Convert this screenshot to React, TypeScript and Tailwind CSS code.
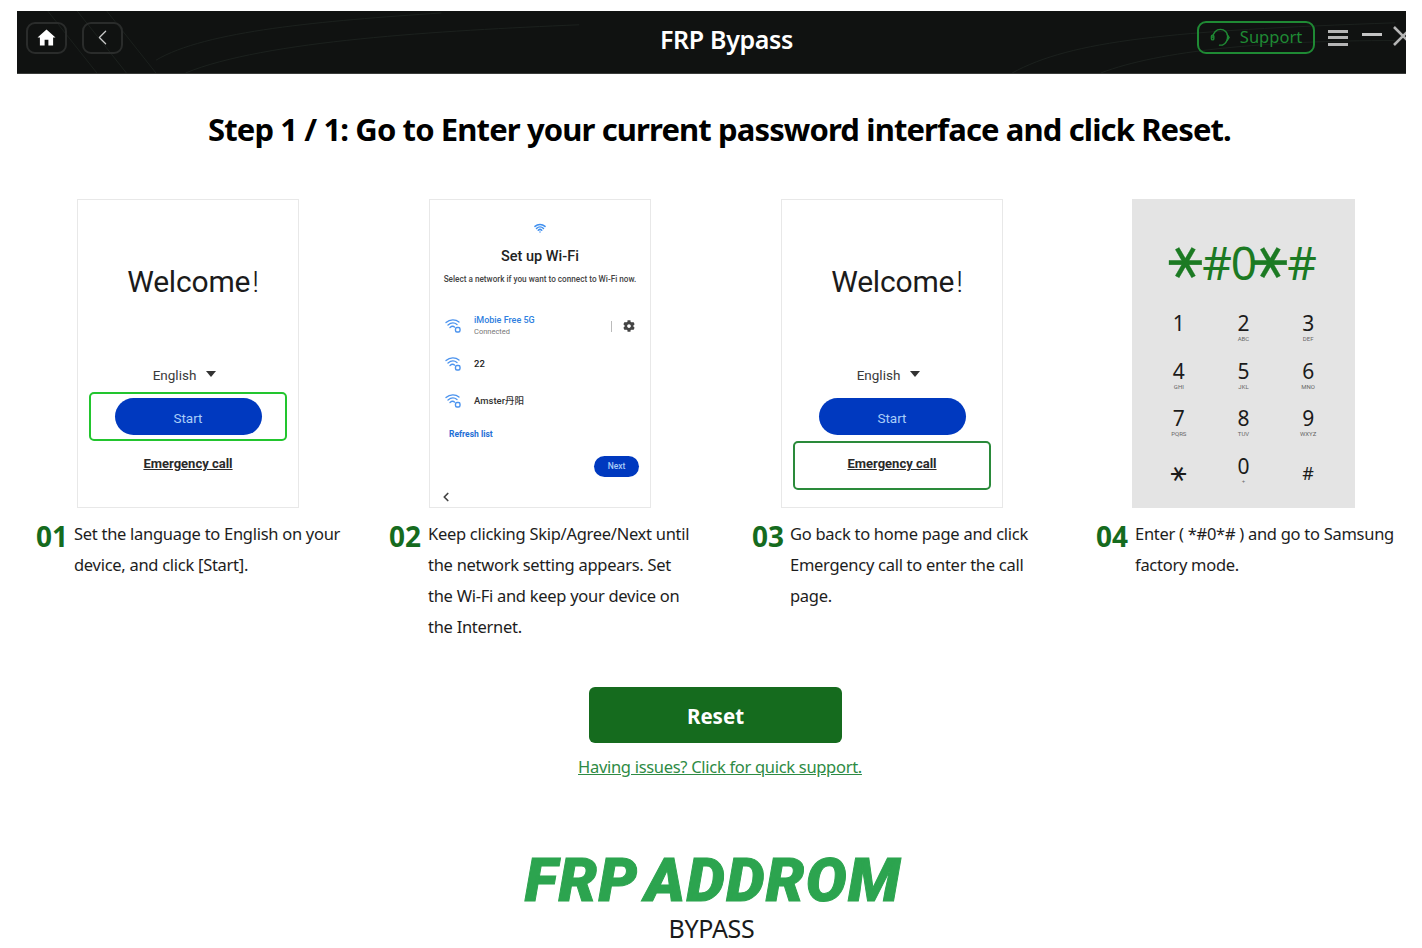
import { ChevronLeft, Wifi } from "lucide-react";
import { FaCog } from "react-icons/fa";

const uiFont = "font-['Noto_Sans',sans-serif]";
const phoneFont = "font-['Roboto',sans-serif]";

const steps = [
  {
    num: "01",
    text: ["Set the language to English on your", "device, and click [Start]."],
    pad: "pl-[24px]",
    numWidth: "w-[38px]",
  },
  {
    num: "02",
    text: ["Keep clicking Skip/Agree/Next until", "the network setting appears. Set", "the Wi-Fi and keep your device on", "the Internet."],
    pad: "pl-[25px]",
    numWidth: "w-[39px]",
  },
  {
    num: "03",
    text: ["Go back to home page and click", "Emergency call to enter the call", "page."],
    pad: "pl-[36px]",
    numWidth: "w-[38px]",
  },
  {
    num: "04",
    text: ["Enter ( *#0*# ) and go to Samsung", "factory mode."],
    pad: "pl-[28px]",
    numWidth: "w-[39px]",
  },
];

const dialKeys = [
  ["1", ""],
  ["2", "ABC"],
  ["3", "DEF"],
  ["4", "GHI"],
  ["5", "JKL"],
  ["6", "MNO"],
  ["7", "PQRS"],
  ["8", "TUV"],
  ["9", "WXYZ"],
];

const HomeIcon = () => (
  <svg viewBox="0 0 20 18" className="h-[17px] w-[19px]" fill="#fff">
    <path d="M10 0.5 L19.5 9 L17 9 L17 17.5 L12 17.5 L12 11.5 L8 11.5 L8 17.5 L3 17.5 L3 9 L0.5 9 Z" />
  </svg>
);

const HeadsetIcon = () => (
  <svg viewBox="0 0 22 22" className="h-[21px] w-[21px]" fill="none" stroke="#1f8a34" strokeWidth="1.5" strokeLinecap="round">
    <path d="M3 11 C3 6 6.5 2.5 11 2.5 C15.5 2.5 18.5 6 18.5 9.5 C18.5 14 17 17.5 13 19 L10 19" />
    <rect x="1.5" y="8.5" width="2.5" height="5" rx="1.2" />
    <path d="M18 8 L20 11 L18 14" />
  </svg>
);

const LockWifi = () => (
  <svg viewBox="0 0 18 16" className="h-[16px] w-[18px]" fill="none" stroke="#4b93ee" strokeWidth="1.3" strokeLinecap="round">
    <path d="M1 4.5 C5 1 10.5 1 14 4" />
    <path d="M3 7 C6 4.5 9.5 4.5 12 6.5" />
    <path d="M5 9.5 C6.5 8.2 8.5 8.2 9.5 9" />
    <rect x="10.5" y="9.5" width="4.5" height="4.5" rx="1.5" strokeWidth="1.4" />
  </svg>
);

const WelcomeScreen = ({ highlight }: { highlight: "start" | "call" }) => (
  <div className={`flex h-[309px] w-[222px] flex-col items-center border border-[#e8e8e8] bg-white text-[#1b1b1b] ${phoneFont}`}>
    <p className="mt-[64px] ml-[10px] h-[36px] text-[30px] leading-[36px] tracking-[-0.2px]">
      Welcome<span className="ml-[2px] font-light">!</span>
    </p>
    <div className="mt-[65px] mr-[7px] flex h-[20px] items-center gap-[10px] text-[13.5px] text-[#3a3a3a]">
      <span>English</span>
      <span className="mb-[2px] h-0 w-0 border-x-[5px] border-t-[6px] border-x-transparent border-t-[#333]" />
    </div>
    <div className={`mt-[7px] flex h-[49px] w-[198px] items-center justify-center rounded-[5px] border-[2.5px] ${highlight === "start" ? "border-[#22c52e]" : "border-transparent"}`}>
      <div className="flex h-[37px] w-[147px] items-center justify-center rounded-full bg-[#0039bf] pt-[3px] text-[13.5px] text-[#a9cdf8]">
        Start
      </div>
    </div>
    <div className={`flex h-[49px] w-[198px] items-center justify-center rounded-[5px] border-[2.5px] pb-[3px] ${highlight === "call" ? "border-[#2a8a3a]" : "border-transparent"}`}>
      <span className="text-[13px] font-bold text-[#2a2a2a] underline">Emergency call</span>
    </div>
  </div>
);

const WifiScreen = () => (
  <div className={`flex h-[309px] w-[222px] flex-col border border-[#e8e8e8] bg-white text-[#222] ${phoneFont}`}>
    <div className="mt-[22px] flex justify-center">
      <Wifi size={12} strokeWidth={3} color="#3f8fef" />
    </div>
    <p className="mt-[13px] text-center text-[14.5px] font-medium leading-[20px]">Set up Wi-Fi</p>
    <p className="mt-[6px] text-center text-[8.2px] font-medium leading-[12px] text-[#444]">
      Select a network if you want to connect to Wi-Fi now.
    </p>
    <div className="mt-[30px] flex items-center pl-[15px] pr-[15px]">
      <LockWifi />
      <div className="ml-[11px] flex-1">
        <p className="text-[9px] font-medium leading-[11px] text-[#2f7fe0]">iMobie Free 5G</p>
        <p className="text-[7.5px] leading-[11px] text-[#777]">Connected</p>
      </div>
      <span className="mr-[11px] h-[11px] w-px bg-[#bbb]" />
      <FaCog size={12} color="#444" />
    </div>
    <div className="mt-[19px] flex items-center pl-[15px]">
      <LockWifi />
      <p className="ml-[11px] text-[9.5px] font-medium">22</p>
    </div>
    <div className="mt-[21px] flex items-center pl-[15px]">
      <LockWifi />
      <p className="ml-[11px] text-[9.5px] font-medium text-[#333]">
        Amster<span className="font-['Noto_Sans_CJK_SC',sans-serif]">丹阳</span>
      </p>
    </div>
    <p className="mt-[19px] pl-[19px] text-[8.5px] font-bold leading-[12px] text-[#1f6fd6]">Refresh list</p>
    <div className="mt-[16px] flex justify-end pr-[11px]">
      <div className="flex h-[21px] w-[45px] items-center justify-center rounded-full bg-[#0039bf] text-[8.5px] font-medium text-[#a9cdf8]">
        Next
      </div>
    </div>
    <ChevronLeft size={14} strokeWidth={3} color="#444" className="mt-[13px] ml-[9px]" />
  </div>
);

const BigStar = () => (
  <span className="inline-flex h-[40px] w-[31px] shrink-0 items-center justify-center">
    <span className="inline-block scale-[1.45] rotate-90 font-['DejaVu_Sans',sans-serif] text-[36px] leading-[40px] [-webkit-text-stroke:0.2px_#1c7a23]">∗</span>
  </span>
);

const DialScreen = () => (
  <div className={`ml-[-1px] flex h-[309px] w-[223px] flex-col items-center bg-[#e4e4e4] text-[#1b1b1b] ${uiFont}`}>
    <div className="mt-[36px] flex h-[54px] items-center text-[46px] leading-[54px] tracking-[-1px] text-[#1c7a23]">
      <BigStar />
      <span>#0</span>
      <BigStar />
      <span>#</span>
    </div>
    <div className="mt-[22px] grid w-[194px] grid-cols-3">
      {dialKeys.map(([digit, letters]) => (
        <div key={digit} className="flex h-[47.5px] flex-col items-center">
          <span className="text-[21px] leading-[24px]">{digit}</span>
          <span className={`text-[6px] leading-[8px] text-[#666] ${phoneFont}`}>{letters}</span>
        </div>
      ))}
      <div className="flex h-[47.5px] items-start justify-center">
        <span className="mt-[3px] inline-block rotate-90 font-['DejaVu_Sans',sans-serif] text-[24px] leading-[34px]">∗</span>
      </div>
      <div className="flex h-[47.5px] flex-col items-center">
        <span className="text-[21px] leading-[24px]">0</span>
        <span className="text-[6px] leading-[8px] text-[#666]">+</span>
      </div>
      <div className="flex h-[47.5px] items-start justify-center pt-[6px]">
        <span className="text-[18px] leading-[26px]">#</span>
      </div>
    </div>
  </div>
);

export default function App() {
  return (
    <div className={`min-h-[948px] overflow-hidden bg-white pt-[11px] ${uiFont}`}>
      <header className="relative ml-[17px] flex h-[63px] w-[1389px] items-center overflow-hidden border-b border-[#3a3c3a] bg-[#101211] pb-[9px]">
        <svg className="absolute inset-0 h-full w-full" viewBox="0 0 1389 63" fill="none" stroke="#1c211e" strokeWidth="1">
          <path d="M130 50 C 180 20 300 10 420 2" />
          <path d="M160 63 C 240 30 420 20 560 14" />
          <path d="M1000 63 C 1060 30 1160 20 1389 12" />
          <path d="M1090 63 C 1150 40 1260 30 1389 30" />
          <path d="M20 0 L70 63 M50 0 L100 63 M80 0 L130 63" />
        </svg>
        <div className="relative ml-[9px] flex gap-[15px]">
          <button type="button" className="flex h-[32px] w-[41px] items-center justify-center rounded-[9px] border-2 border-[#2a2c2b]">
            <HomeIcon />
          </button>
          <button type="button" className="flex h-[32px] w-[41px] items-center justify-center rounded-[9px] border-2 border-[#2a2c2b]">
            <ChevronLeft size={25} strokeWidth={1.2} color="#c9c9c9" />
          </button>
        </div>
        <h2 className="relative mt-[3px] ml-[537px] w-[136px] whitespace-nowrap text-center text-[25px] leading-[32px] font-semibold tracking-[-0.35px] text-white">
          FRP Bypass
        </h2>
        <div className="relative ml-[404px] flex shrink-0 items-center">
          <button type="button" className="flex h-[33px] w-[118px] items-center justify-center gap-[9px] rounded-[9px] border-2 border-[#1f8a34] text-[16.5px] text-[#1f8a34]">
            <HeadsetIcon />
            <span>Support</span>
          </button>
          <div className="ml-[13px] flex w-[20px] flex-col gap-[3.5px]">
            <span className="h-[3px] bg-[#b5b5b5]" />
            <span className="h-[3px] bg-[#b5b5b5]" />
            <span className="h-[3px] bg-[#b5b5b5]" />
          </div>
          <span className="mb-[6px] ml-[14px] h-[2.5px] w-[20px] bg-[#c4c4c4]" />
          <svg viewBox="0 0 20 20" className="mb-[4px] ml-[11px] h-[20px] w-[20px] shrink-0" stroke="#b5b5b5" strokeWidth="2.6">
            <path d="M1 1 L19 19 M19 1 L1 19" />
          </svg>
        </div>
      </header>

      <h1 className="mt-[35px] ml-[17px] text-center text-[31px] leading-[40px] font-bold tracking-[-0.88px] whitespace-nowrap text-black">
        Step 1 / 1: Go to Enter your current password interface and click Reset.
      </h1>

      <div className="mt-[50px] ml-[12px] grid w-[1408px] grid-cols-4">
        {steps.map((step, i) => (
          <div key={step.num} className="flex flex-col">
            <div className="flex justify-center">
              {i === 0 && <WelcomeScreen highlight="start" />}
              {i === 1 && <WifiScreen />}
              {i === 2 && <WelcomeScreen highlight="call" />}
              {i === 3 && <DialScreen />}
            </div>
            <div className={`mt-[10px] flex ${step.pad}`}>
              <span className={`mt-[3px] shrink-0 text-[28px] leading-[31px] font-bold text-[#156b1e] ${step.numWidth}`}>{step.num}</span>
              <div className="text-[16.5px] leading-[31px] tracking-[-0.28px] whitespace-nowrap text-[#1d1d1d]">
                {step.text.map(line => (
                  <p key={line}>{line}</p>
                ))}
              </div>
            </div>
          </div>
        ))}
      </div>

      <div className="flex flex-col items-center">
        <button type="button" className="mt-[45px] ml-[9px] h-[56px] w-[253px] rounded-[6px] bg-[#156b1e] pt-[3px] text-[20.5px] font-bold text-white">
          Reset
        </button>
        <a className="mt-[9px] ml-[18px] text-[16.5px] leading-[30px] tracking-[-0.3px] text-[#2e8b44] underline">
          Having issues? Click for quick support.
        </a>
        <p className="mt-[65px] ml-[4px] font-['Roboto',sans-serif] text-[61px] leading-[66px] font-black tracking-[1.4px] [word-spacing:-10px] whitespace-nowrap text-[#2ca44f] italic [-webkit-text-stroke:1px_#2ca44f]">
          FRP ADDROM
        </p>
        <p className="mt-[-2px] ml-[1px] text-[25px] leading-[34px] tracking-[-0.3px] text-[#1a1a1a]">BYPASS</p>
      </div>
    </div>
  );
}
